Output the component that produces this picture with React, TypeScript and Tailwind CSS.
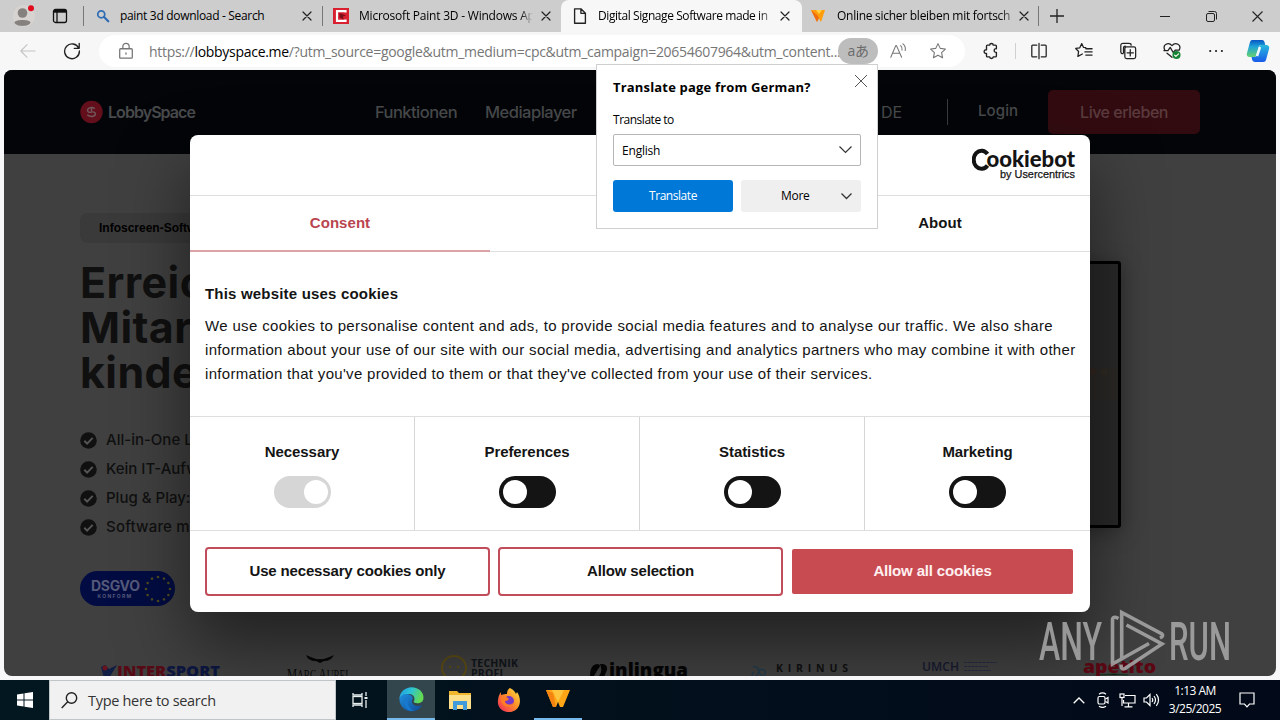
import type { ReactNode } from "react";

function Icon({ size = 18, className = "", children }: { size?: number; className?: string; children: ReactNode }) {
  return (
    <svg width={size} height={size} viewBox="0 0 20 20" fill="none" stroke="currentColor" strokeWidth="1.2" strokeLinecap="round" strokeLinejoin="round" className={"shrink-0 " + className}>
      {children}
    </svg>
  );
}

function Close() {
  return (
    <Icon size={16} className="text-[#222]">
      <path d="M5 5l10 10M15 5L5 15" strokeWidth="1.5" />
    </Icon>
  );
}

function TabStrip() {
  return (
    <div className="flex h-8 shrink-0 items-center bg-[#cdcdcd] text-[12px] text-black">
      <div className="flex w-12 justify-center">
        <svg width="24" height="24" viewBox="0 0 24 24">
          <rect x="1" y="1" width="22" height="22" rx="11" fill="#d6d3d1" />
          <circle cx="10.500" cy="9" r="4.800" fill="#85817e" />
          <path d="M2.500 18.500c0-3.500 16-3.500 16 0c-1 4.500-15 4.500-16 0z" fill="#85817e" />
          <circle cx="19" cy="4.300" r="3" fill="#e00b1c" />
        </svg>
      </div>
      <div className="flex w-[35px] justify-center pr-[11px]">
        <svg width="16" height="16" viewBox="0 0 16 16" fill="none" stroke="#111" strokeWidth="1.300">
          <rect x="1.500" y="1.500" width="13" height="13" rx="2" />
          <path d="M2 3.200h12" strokeWidth="3" />
          <path d="M5 3v11.500" />
        </svg>
      </div>
      <div className="h-5 w-px bg-[#777]" />
      <div className="flex h-full w-[238px] items-center pl-3">
        <Icon size={14} className="text-[#2f6db5]">
          <circle cx="7.500" cy="7.500" r="5" strokeWidth="2.500" />
          <path d="M11.500 11.500l6 6" strokeWidth="3.200" />
        </Icon>
        <span className="ml-[10px] w-[175px] whitespace-nowrap text-[12px] -tracking-[0.320px]">paint 3d download - Search</span>
        <span className="ml-[4px]"><Close /></span>
      </div>
      <div className="h-5 w-px bg-[#777]" />
      <div className="flex h-full w-[238px] items-center pl-[10px]">
        <svg width="16" height="16" viewBox="0 0 16 16">
          <rect width="16" height="16" fill="#d9202f" />
          <path d="M12.500 4.500V3.200H4v9.600h8.500v-1.300" fill="none" stroke="#fff" strokeWidth="2.200" />
          <path d="M6.500 5l6.500 2.500-3 1 .5 3-4-2z" fill="#7d0d18" />
        </svg>
        <span className="ml-[10px] w-[177px] overflow-hidden bg-gradient-to-r from-black from-90% to-[#cdcdcd] to-98% bg-clip-text whitespace-nowrap tracking-[-0.220px] text-transparent">Microsoft Paint 3D - Windows Ap</span>
        <span className="ml-[2px]"><Close /></span>
      </div>
      <div className="flex h-full w-[241px] items-center rounded-t-lg bg-[#f7f7f7] pl-[10px]">
        <Icon size={18} className="text-[#222]">
          <path d="M4 2h7l5 5v11H4zM11 2v5h5" strokeWidth="1.500" />
        </Icon>
        <span className="ml-[9px] w-[174px] overflow-hidden bg-gradient-to-r from-black from-90% to-[#f7f7f7] to-[104%] bg-clip-text whitespace-nowrap tracking-[-0.420px] text-transparent">Digital Signage Software made in</span>
        <span className="ml-[5px]"><Close /></span>
      </div>
      <div className="flex h-full w-[236px] items-center rounded-bl-md pl-2">
        <svg width="16" height="16" viewBox="0 0 16 16">
          <path d="M1 2l14 0-4 12-2.500-4L7 14z" fill="#ff9d0a" />
          <path d="M1 2l6 5 2 3-2 4z" fill="#ee6b12" />
          <path d="M6 2l3 4 3-4z" fill="#ffd24a" />
        </svg>
        <span className="ml-[11px] w-[176px] overflow-hidden bg-gradient-to-r from-black from-90% to-[#cdcdcd] to-[104%] bg-clip-text whitespace-nowrap tracking-[-0.270px] text-transparent">Online sicher bleiben mit fortsch</span>
        <span className="ml-[3px]"><Close /></span>
      </div>
      <div className="h-5 w-px bg-[#777]" />
      <div className="flex w-9 justify-center">
        <svg width="16" height="16" viewBox="0 0 16 16" stroke="#222" strokeWidth="1.300"><path d="M1 8h14M8 1v14" /></svg>
      </div>
      <div className="ml-[67px] flex text-[#222]">
        <div className="flex w-[46px] justify-center"><svg width="10" height="10" viewBox="0 0 10 10" stroke="#222"><path d="M0 5.500h10" /></svg></div>
        <div className="flex w-[46px] justify-center"><svg width="11" height="11" viewBox="0 0 11 11" fill="none" stroke="#222"><rect x=".5" y="2.500" width="8" height="8" rx="1.500" /><path d="M2.500 .5h6q2 0 2 2v6" /></svg></div>
        <div className="flex w-[46px] justify-center"><svg width="11" height="11" viewBox="0 0 11 11" stroke="#222" strokeWidth="1.100"><path d="M.5 .5l10 10M10.500 .5l-10 10" /></svg></div>
      </div>
    </div>
  );
}

function Toolbar() {
  return (
    <div className="flex h-[38px] shrink-0 items-center bg-[#f7f7f7] text-[#222]">
      <div className="flex w-[56px] justify-center text-[#c4c4c4]"><Icon><path d="M18 10H2M9 3l-7 7 7 7" /></Icon></div>
      <div className="flex w-[43px] pl-[7px]"><Icon><path d="M17.500 7A8.200 8.200 0 1 0 18.200 10M18 1.500V7h-5.500" strokeWidth="1.500" /></Icon></div>
      <div className="flex h-8 w-[866px] items-center rounded-full bg-white text-[#767676]">
        <span className="ml-[18px]"><Icon><path d="M4 7.500h12q1 0 1 1V17q0 1-1 1H4q-1 0-1-1V8.500q0-1 1-1zM6.500 7V5a3.500 3.500 0 0 1 7 0v2M10 12v1.500" strokeWidth="1.400" /></Icon></span>
        <span className="ml-[14px] w-[689px] shrink-0 whitespace-nowrap text-[14px] tracking-[-0.290px]">
          https://<span className="text-black">lobbyspace.me</span>/?utm_source=google&amp;utm_medium=cpc&amp;utm_campaign=20654607964&amp;utm_content...
        </span>
        <span className="flex h-[26px] w-10 shrink-0 items-center justify-center rounded-full bg-[#bdbdbd] pb-px text-[14px] tracking-[-0.500px] text-[#6a6a6a]">aあ</span>
        <span className="ml-[11px]"><Icon><path d="M2 17L7.500 4h.8L14 17M4 12.500h8M13 4q2 2 1.500 5M15.500 2q3.500 3 2.500 7.500" /></Icon></span>
        <span className="ml-[22px]"><Icon><path d="M10 1.800l2.500 5.300 5.700.7-4.200 4 1.100 5.800L10 14.800l-5.100 2.800L6 11.800l-4.200-4 5.700-.7z" /></Icon></span>
      </div>
      <div className="flex w-[50px] justify-center pl-[2px]"><Icon><path d="M6 3.500h2.500c0-2.500 4-2.500 4 0H15q1 0 1 1v3c-3-.8-3.500 4.500 0 4v4q0 1-1 1h-2.500c0 2.500-4 2.500-4 0H6q-1 0-1-1v-2.800c-3.500.6-3.500-4.600 0-4V4.500q0-1 1-1z" strokeWidth="1.500" /></Icon></div>
      <div className="h-4 w-px bg-[#d0d0d0]" />
      <div className="flex w-[46px] justify-center"><Icon><path d="M7.500 3.500H3q-1 0-1 1v11q0 1 1 1h4.500M12.500 3.500H17q1 0 1 1v11q0 1-1 1h-4.500M10 1.500v17" strokeWidth="1.400" /></Icon></div>
      <div className="flex w-[44px] justify-center"><Icon><path d="M12 6.300L9.500 6 7.500 1.800 5.300 6.400.8 7.200 4 10.500l-.8 5.500 5-2.700M12 7.500h7M11 11h8M12 14.500h7" strokeWidth="1.400" /></Icon></div>
      <div className="flex w-[44px] justify-center"><Icon><path d="M4.500 13Q2 13 2 10.500V4q0-2.500 2.500-2.500h6.500q2.500 0 2.500 2M5 12V7q0-2.500 2-2.500M8.500 5.500h8q2 0 2 2v9q0 2-2 2h-8q-2 0-2-2v-9q0-2 2-2zM12.500 8.500v7M9 12h7" strokeWidth="1.400" /></Icon></div>
      <div className="flex w-[44px] justify-center"><Icon><path d="M2 9C-1 3 6-.5 10 4c4-4.500 11-1 8 5M1 9.500h4.500L8 6l3.500 6 2-3H18M4.500 12.500L10 17" strokeWidth="1.400" /><circle cx="15" cy="14.500" r="4.500" fill="#168432" stroke="none" /><path d="M12.800 14.500l1.500 1.600 3-3" stroke="#fff" /></Icon></div>
      <div className="flex w-[44px] justify-center"><Icon><path d="M3.500 10h.1M10 10h.1M16.500 10h.1" strokeWidth="2.300" /></Icon></div>
      <div className="flex w-[40px] justify-center">
        <svg width="24" height="24" viewBox="0 0 24 24">
          <defs><linearGradient id="cp1" x1="0" y1="0" x2="0" y2="1"><stop offset="0" stopColor="#0756c4" /><stop offset=".4" stopColor="#1fa5d8" /><stop offset="1" stopColor="#67d36c" /></linearGradient><linearGradient id="cp2" x1="0" y1="0" x2="0" y2="1"><stop offset="0" stopColor="#28b9dc" /><stop offset="1" stopColor="#195bea" /></linearGradient></defs>
          <path d="M6 1h10q2 0 2.500 2l.8 3h-4q-2 0-2.500 2l-2 8q-.5 2-2.500 2H3q-3-1-2-4L4 3q.6-2 2-2z" fill="url(#cp1)" />
          <path d="M18 6h3q3 1 2 4l-3 11q-.6 2-2.500 2H9q-2 0-2.800-2L5.500 18h3q2 0 2.500-2l2-8q.5-2 2.500-2z" fill="url(#cp2)" />
          <path d="M14 8l-3 9" stroke="#eef9ff" strokeWidth="2.500" />
        </svg>
      </div>
    </div>
  );
}

function PageHeader() {
  return (
    <header className="flex h-[84px] items-center bg-[#030508] pl-[76px] font-['Inter','Noto_Sans',sans-serif] text-[16px] font-medium text-[#484a4c]">
      <svg width="23" height="24" viewBox="0 0 24 24"><circle cx="12" cy="12" r="11.700" fill="#620f1b" /><path d="M15.500 8.500C12 6 7 8 8 11c.5 1.500 3 1.500 4.500 1.200M7.500 15c4 3 9 1.500 8.500-1.500-.3-1.500-3-1.800-5-1.500M12 8v3" fill="none" stroke="#71565b" strokeWidth="1.500" /></svg>
      <span className="ml-[5px] w-[87px] text-[16px] font-semibold tracking-[-0.950px]">LobbySpace</span>
      <span className="ml-[180px] w-[110px] tracking-[-0.550px] text-[16.500px]">Funktionen</span>
      <span className="w-[120px] tracking-[-0.500px] text-[16.500px]">Mediaplayer</span>
      <span className="ml-[276px] w-[66px] font-normal">DE</span>
      <span className="h-[26px] w-px bg-[#393b3e]" />
      <span className="-mt-[2px] ml-[30px] w-[70px] text-[15px] tracking-[0.1px]">Login</span>
      <span className="flex h-[44px] w-[152px] items-center justify-center rounded-[5px] bg-[#320b10] tracking-[-0.500px] text-[#5b3b3e]">Live erleben</span>
    </header>
  );
}

function Check({ children }: { children: ReactNode }) {
  return (
    <li className="flex h-[29px] items-center whitespace-nowrap">
      <svg width="17" height="17" viewBox="0 0 17 17" className="mr-[9px]"><circle cx="8.500" cy="8.500" r="8.300" fill="#101010" /><path d="M4.300 8.800l2.800 2.800 5.600-5.700" fill="none" stroke="#555" strokeWidth="2" /></svg>
      {children}
    </li>
  );
}

const stars = Array.from({ length: 12 }, (_, i) => i * 30);

function Hero() {
  return (
    <section className="flex h-[501px] pl-[76px] font-['Inter','Noto_Sans',sans-serif] text-[#101010]">
      <div className="w-[640px] pt-[59px]">
        <div className="flex h-[30px] w-fit items-center rounded-lg bg-[#3a3a3a] px-[19px] font-['Liberation_Sans',sans-serif] text-[12px] font-bold text-black">Infoscreen-Softw</div>
        <h1 className="mt-[17px] text-[43px] leading-[45px] font-bold tracking-[0.400px] whitespace-nowrap">Erreich<br />Mitarb<br />kinder</h1>
        <ul className="mt-[31px] text-[15px] font-medium">
          <Check>All-in-One L</Check>
          <Check>Kein IT-Aufw</Check>
          <Check>Plug &amp; Play:</Check>
          <Check><span className="tracking-[0.200px]">Software m</span></Check>
        </ul>
        <div className="mt-[29px] flex h-[35px] w-[95px] items-center rounded-full bg-[#020c42] pl-[11px] text-[#55597a]">
          <div className="w-[48px] text-center">
            <div className="text-[14px] leading-[15px] font-bold tracking-[-0.300px]">DSGVO</div>
            <div className="text-[5px] leading-[6px] font-bold tracking-[1.300px]">KONFORM</div>
          </div>
          <svg width="28" height="28" viewBox="-14 -14 28 28" className="ml-[5px]">
            {stars.map((a) => <circle key={a} cx="0" cy="-12" r="1.300" fill="#4e4c1e" transform={`rotate(${a})`} />)}
          </svg>
        </div>
      </div>
      <div className="mt-[107px] ml-[50px] h-[267px] w-[351px] rounded-[3px] border-[3px] border-black bg-[#292929] shadow-[0_4px_22px_rgba(0,0,0,0.35)]">
        <div className="mt-[104px] ml-auto flex h-[32px] w-[33px] items-start gap-[5px] bg-[#2b2926]">
          <span className="ml-[4px] h-[7px] w-[7px] rounded-full bg-[#332722]" />
          <span className="h-[7px] w-[7px] rounded-full bg-[#302a23]" />
        </div>
      </div>
    </section>
  );
}

function Logos() {
  return (
    <svg width="1272" height="38" viewBox="4 638 1272 38" className="block" fontFamily="Open Sans, Noto Sans, sans-serif">
      <path d="M101 667l4-2 4 4 8-4-8 13h-5z" fill="#101d45" /><circle cx="105" cy="668" r="2.500" fill="#67141e" />
      <text x="117" y="677" fontSize="15.500" fontWeight="800" textLength="103" lengthAdjust="spacingAndGlyphs" fill="#580b17">INTER<tspan fill="#0d1742">SPORT</tspan></text>
      <path d="M306 655q10 5 14 4 4 1 14-4-3 6-10 6l-4 2-4-2q-8 0-10-6z" fill="#050505" />
      <text x="287" y="680" fontSize="17" textLength="64" lengthAdjust="spacingAndGlyphs" fontFamily="Liberation Serif, serif" fill="#0b0b0b">M<tspan fontSize="14">ARC</tspan> A<tspan fontSize="14">UREL</tspan></text>
      <circle cx="454" cy="668" r="12" fill="none" stroke="#5d4d14" strokeWidth="2" /><circle cx="450" cy="667" r="1.200" fill="#5d4d14" /><circle cx="458" cy="667" r="1.200" fill="#5d4d14" />
      <g fill="#10151b" fontWeight="700" fontSize="10.500"><text x="471" y="667" textLength="47">TECHNIK</text><text x="471" y="676.500" textLength="32">PROFI</text></g>
      <path d="M590 676q0-12 8-12 4 1 0 5l-4 7zM600 664q8-1 7 6l-3 7-5-1q4-4 1-12z" fill="#050505" />
      <text x="609" y="677" fontSize="19" fontWeight="800" textLength="79" lengthAdjust="spacingAndGlyphs" fill="#050505">inlingua</text>
      <path d="M753 667q5-1 6 4t4 5q4-3 1-6-4-2-6 3t-5 4q-2-3 1-5" fill="none" stroke="#243b4c" strokeWidth="1.500" />
      <text x="776" y="672" fontSize="10.500" fontWeight="700" textLength="72" fill="#101010">KIRINUS</text>
      <text x="922" y="671" fontSize="12.500" fontWeight="600" textLength="37" lengthAdjust="spacingAndGlyphs" fill="#171a31">UMCH</text>
      <path d="M964 662.500h33M964 666.500h24M964 670.500h27" stroke="#252c43" strokeWidth="1.200" strokeDasharray="3 .7" />
      <text x="1083" y="673" fontSize="18" fontWeight="800" textLength="73" lengthAdjust="spacingAndGlyphs" fill="#5c0713">apetito</text>
      <path d="M1100 675q14-2 28 0" stroke="#17391f" />
    </svg>
  );
}

function Toggle({ label, on = false }: { label: string; on?: boolean }) {
  return (
    <div className="flex w-[225px] flex-col items-center border-r border-[#d6d6d6] pt-[27px] last:border-r-0">
      <span className="flex h-4 items-center pt-px text-[15px] font-bold tracking-[-0.080px]">{label}</span>
      <span className={on ? "mt-[16px] flex h-8 w-[57px] items-center justify-end rounded-full bg-[#d6d6d6] px-[3px]" : "mt-[16px] flex h-8 w-[57px] items-center rounded-full bg-[#141414] px-1"}>
        <span className="h-6 w-6 rounded-full bg-white" />
      </span>
    </div>
  );
}

function CookieDialog() {
  return (
    <div className="absolute top-[65px] left-[186px] flex h-[477px] w-[900px] flex-col overflow-hidden rounded-lg bg-white font-['Liberation_Sans',sans-serif] text-[15px] text-[#141414] shadow-[0_32px_68px_rgba(0,0,0,0.5)]">
      <div className="flex h-[60px] shrink-0 justify-end pt-[12px] pr-[14px]">
        <svg width="104" height="34" viewBox="0 0 104 34" fill="#141414" fontFamily="Lato, sans-serif">
          <path d="M15.500 7A7.800 9 0 1 0 15.500 18.500" fill="none" stroke="#141414" strokeWidth="4" />
          <text x="14.500" y="19.800" fontSize="22" fontWeight="900" textLength="88.500" lengthAdjust="spacingAndGlyphs">ookiebot</text>
          <text x="28" y="30.500" fontSize="11" fontFamily="Liberation Sans, sans-serif" stroke="#141414" strokeWidth=".25" textLength="75" lengthAdjust="spacingAndGlyphs">by Usercentrics</text>
        </svg>
      </div>
      <div className="flex h-[57px] shrink-0 border-y border-[#dedede] font-bold tracking-[0.050px]">
        <span className="-mb-px flex flex-1 items-center justify-center border-b-2 border-[#d9a3a8] text-[#b94550]">Consent</span>
        <span className="flex flex-1 items-center justify-center">Details</span>
        <span className="flex flex-1 items-center justify-center">About</span>
      </div>
      <div className="h-[164px] shrink-0 pt-[33px] pl-[15px]">
        <h2 className="text-[15px] leading-[18px] font-bold tracking-[0.190px]">This website uses cookies</h2>
        <p className="mt-[11px] leading-6 tracking-[0.345px] whitespace-nowrap">
          We use cookies to personalise content and ads, to provide social media features and to analyse our traffic. We also share<br />
          <span className="tracking-[0.325px]">information about your use of our site with our social media, advertising and analytics partners who may combine it with other</span><br />
          <span className="tracking-[0.310px]">information that you've provided to them or that they've collected from your use of their services.</span>
        </p>
      </div>
      <div className="flex h-[115px] shrink-0 border-y border-[#dedede]">
        <Toggle label="Necessary" on />
        <Toggle label="Preferences" />
        <Toggle label="Statistics" />
        <Toggle label="Marketing" />
      </div>
      <div className="flex gap-2 px-[15px] pt-[16px] text-center font-bold tracking-[-0.160px]">
        <button className="h-[49px] w-[285px] rounded border-2 border-[#c14d5b]">Use necessary cookies only</button>
        <button className="h-[49px] w-[285px] rounded border-2 border-[#c14d5b]">Allow selection</button>
        <button className="mt-[2px] ml-px h-[45px] w-[281px] rounded-xs bg-[#c84b52] text-[#fff0f0]">Allow all cookies</button>
      </div>
    </div>
  );
}

function TranslatePopup() {
  return (
    <div className="absolute top-16 left-[596px] h-[165px] w-[282px] border border-[#cfcfcf] bg-white px-4 text-[12px] text-black">
      <div className="flex h-[45px] items-center justify-between">
        <span className="text-[13px] font-bold tracking-[0.180px] whitespace-nowrap">Translate page from German?</span>
        <svg width="12" height="12" viewBox="0 0 12 12" stroke="#555" className="-mt-[14px] -mr-[6px] shrink-0"><path d="M0 0l12 12M12 0L0 12" /></svg>
      </div>
      <div className="h-[24px] pt-px tracking-[-0.480px]">Translate to</div>
      <div className="flex h-8 items-center justify-between rounded-xs border border-[#b6b6b6] px-2">
        <span className="pt-px tracking-[-0.2px]">English</span>
        <svg width="13" height="8" viewBox="0 0 13 8" fill="none" stroke="#333" strokeWidth="1.200"><path d="M.5 .5l6 6 6-6" /></svg>
      </div>
      <div className="mt-[14px] flex gap-2">
        <button className="h-8 w-[120px] rounded-[3px] bg-[#0078d7] tracking-[-0.450px] text-white">Translate</button>
        <button className="flex h-8 w-[120px] items-center rounded-[3px] bg-[#efefef] pr-[9px] pl-10">
          <span className="flex-1 text-left tracking-[-0.300px]">More</span>
          <svg width="11" height="7" viewBox="0 0 11 7" fill="none" stroke="#333" strokeWidth="1.300"><path d="M.5 .5l5 5 5-5" /></svg>
        </button>
      </div>
    </div>
  );
}

function Watermark() {
  return (
    <svg width="194" height="64" viewBox="0 0 194 64" className="absolute top-[609px] left-[1038px] opacity-85" fill="none" stroke="#aaaaaa" strokeWidth="3.600">
      <g fill="#aaaaaa" stroke="none" fontFamily="Roboto, sans-serif" fontSize="53" fontWeight="500">
        <text x="1" y="51" textLength="63" lengthAdjust="spacingAndGlyphs">ANY</text>
        <text x="131" y="51" textLength="62" lengthAdjust="spacingAndGlyphs">RUN</text>
      </g>
      <path d="M80.500 9.500q-6-3-6 1.500V55L111 34.500" />
      <path d="M83.700 50V3.500L124 25q2 2-2 4M88.500 16L124 35 87 59.500q-4 2-4-4" />
    </svg>
  );
}

function Taskbar() {
  return (
    <div className="flex h-10 shrink-0 items-center bg-gradient-to-r from-[#021720] to-[#020918] text-white">
      <div className="flex w-[49px] justify-center">
        <svg width="16" height="16" viewBox="0 0 16 16" fill="#fff"><path d="M0 2.500l6.500-1v6H0zM7.500 1.300L16 0v7.500H7.500zM0 8.500h6.500v6L0 13.500zM7.500 8.500H16V16l-8.500-1.300z" /></svg>
      </div>
      <div className="flex h-10 w-[287px] items-center border border-[#c0c5c7] bg-[#f1f1f1] pl-[11px] text-[#333]">
        <svg width="17" height="17" viewBox="0 0 17 17" fill="none" stroke="#222" strokeWidth="1.400"><circle cx="10.500" cy="6" r="5.200" /><path d="M6.700 9.700L.7 16" /></svg>
        <span className="ml-[10px] pt-px text-[14.500px] tracking-[-0.300px]">Type here to search</span>
      </div>
      <div className="flex w-[51px] justify-center pr-[4px]">
        <svg width="18" height="18" viewBox="0 0 18 18" fill="none" stroke="#e8eef0" strokeWidth="1.300"><path d="M2 2v2h9V2M2 16v-2h9v2M15 1v4M15 9v8" /><rect x="2" y="5.500" width="9" height="7" /><path d="M13.500 7h3" strokeWidth="2" /></svg>
      </div>
      <div className="flex h-10 w-12 items-center justify-center border-b-2 border-[#76b9ed] bg-[#33454d]">
        <svg width="25" height="25" viewBox="0 0 24 24">
          <defs><linearGradient id="eg" x1="0" y1="0" x2="1" y2=".3"><stop offset="0" stopColor="#219be0" /><stop offset=".5" stopColor="#2cc3d5" /><stop offset="1" stopColor="#63d955" /></linearGradient><linearGradient id="eb" x1="0" y1="0" x2="1" y2="1"><stop offset="0" stopColor="#1f8fdc" /><stop offset="1" stopColor="#104a97" /></linearGradient></defs>
          <path d="M.5 12C0 5 6 .3 12 .3c7 0 12 5 11.500 10.500-.3 5-6 5.500-9 4-1-1 .7-1.500.3-4C14 7 10 6 7 7.500 4 9 2 9 .5 12z" fill="url(#eg)" />
          <path d="M.5 12C1 8 5 6 9 7c3 .7 5 3 4 5-1 1-1 3 1 5 2 1.500 5 1.500 8 .5C18 25 7 25 3 19 1 16 .4 14 .5 12z" fill="url(#eb)" />
          <path d="M9.500 10c-3 3-1 10 4.500 13-6 1-10-5-8-10 .7-1.500 2-2.500 3.500-3z" fill="#1779d0" />
        </svg>
      </div>
      <div className="flex w-[49px] justify-center">
        <svg width="22" height="19" viewBox="0 0 22 19"><path d="M0 0h8l2 2h12v16H0z" fill="#f0b62e" /><path d="M0 4h22v14H0z" fill="#ffe08a" /><path d="M4 10h14v9h-4v-5H8v5H4z" fill="#3f9bd9" /></svg>
      </div>
      <div className="flex w-[50px] justify-center pr-px">
        <svg width="24" height="24" viewBox="0 0 24 24">
          <defs><linearGradient id="ff" x1="1" y1="0" x2="0" y2="1"><stop offset="0" stopColor="#ffe64a" /><stop offset=".45" stopColor="#ff9326" /><stop offset="1" stopColor="#f0205f" /></linearGradient></defs>
          <path d="M13 0c4 2 5 4 6 6l1-2c5 7 4 18-6 20C5 25 0 19 1 12c.3-3 1-5 3-8v3c3-1 4-1 6-1 0-3 1-5 3-6z" fill="url(#ff)" />
          <circle cx="12" cy="13" r="5" fill="#7639c5" /><path d="M4 9q4-2 8 2-1 2-4 2c0 4 6 5 9 1-1 6-11 7-13-1z" fill="#ff7b25" />
        </svg>
      </div>
      <div className="flex h-10 w-12 items-center justify-center border-b-2 border-[#76b9ed]">
        <svg width="24" height="18" viewBox="0 0 24 18"><path d="M0 0h24l-7 17h-3l-2-5-2 5H7z" fill="#ffa516" /><path d="M6 0h12l-6 12z" fill="#ffc53e" /><path d="M0 0l7 3 3 14H7z" fill="#f58312" /></svg>
      </div>
      <div className="ml-auto flex items-center pr-[19px]">
        <div className="flex w-6 justify-center"><svg width="12" height="7" viewBox="0 0 12 7" fill="none" stroke="#fff" strokeWidth="1.300"><path d="M.7 6.300L6 1l5.300 5.300" /></svg></div>
        <div className="flex w-6 justify-center"><svg width="14" height="16" viewBox="0 0 14 16" fill="none" stroke="#fff" strokeWidth="1.200"><rect x="2" y="4.500" width="7" height="7.500" rx="1.500" /><path d="M9.500 7l2.500-1.500v5.500L9.500 9.500M3 2.200Q6.500-.3 10 2.200M3 14.200q3.500 2.500 7 0" /></svg></div>
        <div className="flex w-6 justify-center"><svg width="17" height="15" viewBox="0 0 17 15" fill="none" stroke="#fff" strokeWidth="1.200"><path d="M6 2.500h10v7.500H4.500V7M9.500 10v3.500M5.500 13.800h8" /><rect x="1" y="1" width="4" height="3.500" /><path d="M3 4.500V13" /></svg></div>
        <div className="flex w-6 justify-center"><svg width="17" height="14" viewBox="0 0 17 14" fill="none" stroke="#fff" strokeWidth="1.200"><path d="M1 5h2.500L7 1.500v11L3.500 9H1zM9 5q1.500 2 0 4M11 3q3 4 0 8M13.300 1.200q4.500 5.800 0 11.600" /></svg></div>
        <div className="w-[64px] text-center text-[12px] leading-[18px] tracking-[-0.500px]">1:13 AM<br />3/25/2025</div>
        <div className="ml-[6px] flex w-7 justify-center"><svg width="16" height="16" viewBox="0 0 16 16" fill="none" stroke="#fff" strokeWidth="1.200"><path d="M1 1h14v11h-4.500L8 14.800 5.500 12H1z" /></svg></div>
      </div>
    </div>
  );
}

export default function App() {
  return (
    <div className="relative flex h-[720px] w-[1280px] flex-col overflow-hidden bg-[#f7f7f9] font-['Open_Sans','Noto_Sans','Noto_Sans_CJK_JP',sans-serif]">
      <TabStrip />
      <Toolbar />
      <main className="relative mx-1 mb-1 h-[606px] shrink-0 overflow-hidden rounded-lg bg-[#404040]">
        <PageHeader />
        <Hero />
        <div className="-mt-[17px]"><Logos /></div>
        <CookieDialog />
      </main>
      <Taskbar />
      <TranslatePopup />
      <Watermark />
    </div>
  );
}
